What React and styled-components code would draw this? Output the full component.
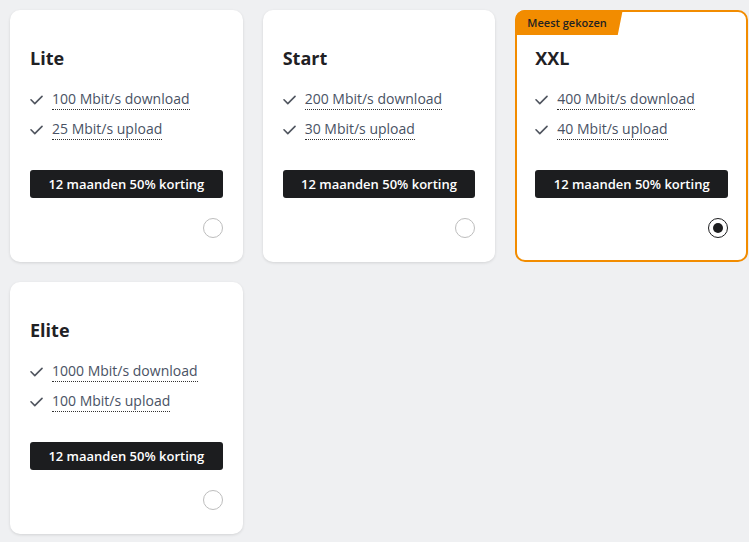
import React from "react";
import styled, { createGlobalStyle, css } from "styled-components";

const GlobalStyle = createGlobalStyle`
  html, body {
    margin: 0;
    padding: 0;
    background: #eff0f2;
  }
  body {
    font-family: "Open Sans", "Noto Sans", sans-serif;
  }
`;

const Grid = styled.div`
  display: grid;
  grid-template-columns: repeat(3, 1fr);
  gap: 20px;
  padding: 10px 1px 10px 10px;
`;

const Card = styled.div`
  position: relative;
  display: flex;
  flex-direction: column;
  background: #fff;
  border: 2px solid transparent;
  border-radius: 10px;
  padding: 32px 18px 22px;
  box-shadow: 0 1px 3px rgba(0, 0, 0, 0.12);
  ${p => p.$selected && css`
    border-color: #f28c00;
    box-shadow: none;
  `}
`;

const Tag = styled.div`
  position: absolute;
  top: -2px;
  left: -2px;
  height: 25px;
  padding: 0 16px 0 12px;
  display: flex;
  align-items: center;
  background: #f28c00;
  border-top-left-radius: 10px;
  clip-path: polygon(0 0, 100% 0, calc(100% - 5px) 100%, 0 100%);
  font-size: 11px;
  font-weight: 600;
  color: #222;
`;

const Title = styled.h2`
  margin: 0;
  font-size: 18px;
  line-height: 28px;
  font-weight: 700;
  color: #1f2124;
`;

const Features = styled.ul`
  list-style: none;
  margin: 17px 0 0;
  padding: 0;
  display: flex;
  flex-direction: column;
  gap: 9px;
`;

const Feature = styled.li`
  display: flex;
  align-items: center;
  gap: 9px;
  height: 21px;
`;

const Label = styled.span`
  display: inline-block;
  font-size: 14px;
  line-height: 20px;
  color: #495264;
  border-bottom: 1px dotted #333;
`;

const Promo = styled.div`
  margin-top: 30px;
  height: 28px;
  display: flex;
  align-items: center;
  justify-content: center;
  background: #1c1d1f;
  border-radius: 3px;
  color: #fff;
  font-size: 13px;
  font-weight: 600;
`;

const RadioRow = styled.div`
  margin-top: 20px;
  display: flex;
  justify-content: flex-end;
`;

const Radio = styled.span`
  box-sizing: border-box;
  width: 20px;
  height: 20px;
  border-radius: 50%;
  border: 1px solid #bdbdbd;
  display: flex;
  align-items: center;
  justify-content: center;
  ${p => p.$checked && css`
    border: 1.5px solid #1c1d1f;
    &::after {
      content: "";
      width: 10px;
      height: 10px;
      border-radius: 50%;
      background: #1c1d1f;
    }
  `}
`;

const Check = () => (
  <svg width="13" height="10" viewBox="0 0 13 10" fill="none">
    <polyline
      points="1,4.8 4.8,8.6 12,1.4"
      stroke="#50555f"
      strokeWidth="1.6"
      strokeLinecap="round"
      strokeLinejoin="round"
    />
  </svg>
);

const plans = [
  { name: "Lite", down: 100, up: 25 },
  { name: "Start", down: 200, up: 30 },
  { name: "XXL", down: 400, up: 40, popular: true, selected: true },
  { name: "Elite", down: 1000, up: 100 }
];

export default function App() {
  return (
    <>
      <GlobalStyle />
      <Grid>
        {plans.map(plan => (
          <Card key={plan.name} $selected={plan.selected}>
            {plan.popular && <Tag>Meest gekozen</Tag>}
            <Title>{plan.name}</Title>
            <Features>
              <Feature>
                <Check />
                <Label>{plan.down} Mbit/s download</Label>
              </Feature>
              <Feature>
                <Check />
                <Label>{plan.up} Mbit/s upload</Label>
              </Feature>
            </Features>
            <Promo>12 maanden 50% korting</Promo>
            <RadioRow>
              <Radio $checked={plan.selected} />
            </RadioRow>
          </Card>
        ))}
      </Grid>
    </>
  );
}
